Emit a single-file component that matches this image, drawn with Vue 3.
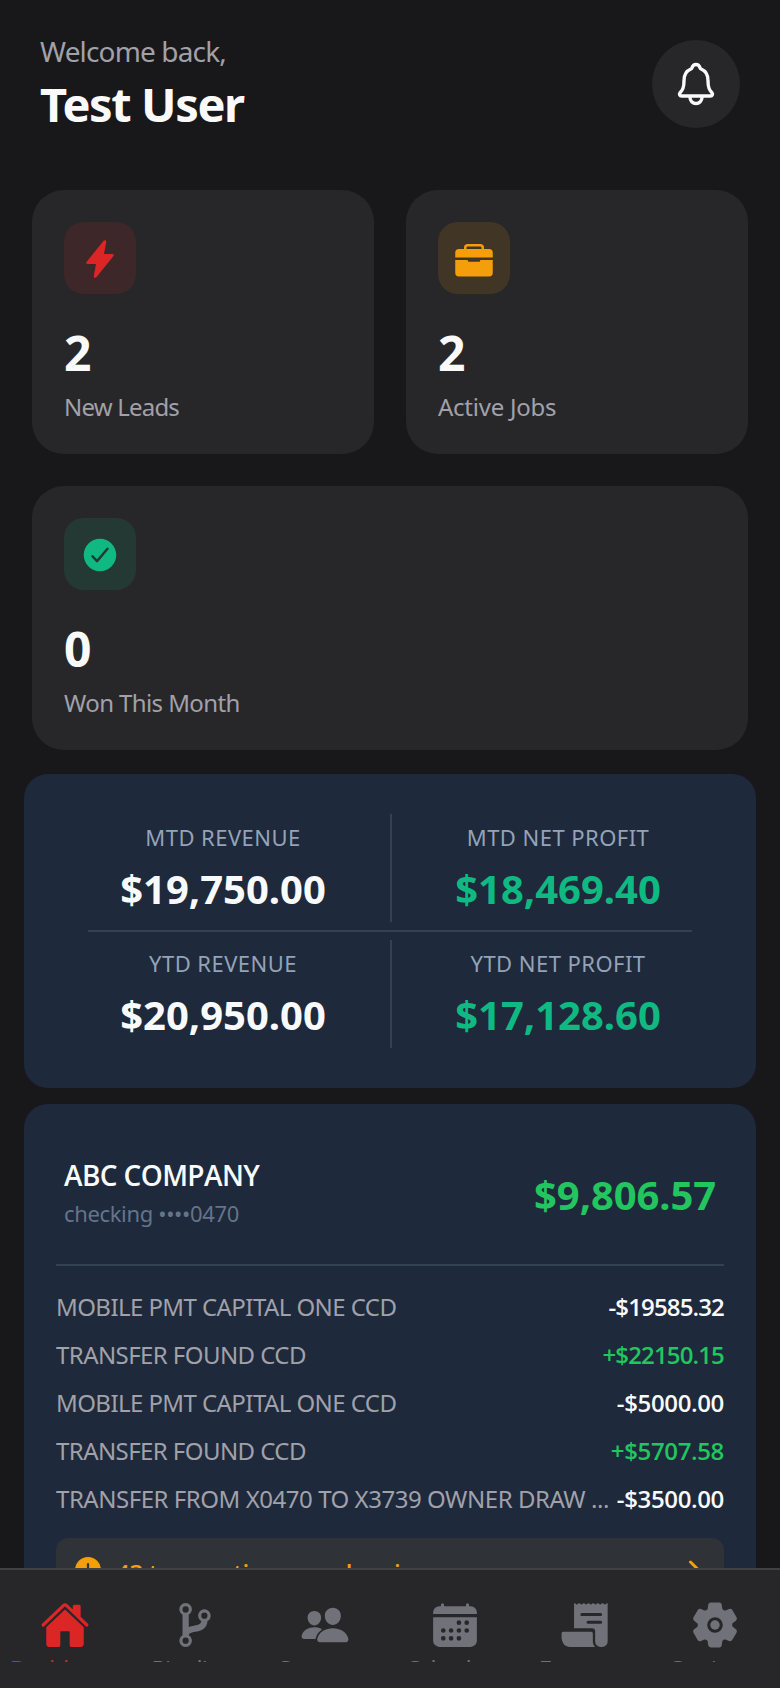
<script setup>
const stats = [
  { icon: 'flash', tone: 'red', value: '2', label: 'New Leads', cls: 'leads' },
  { icon: 'briefcase', tone: 'amber', value: '2', label: 'Active Jobs', cls: 'jobs' },
  { icon: 'check', tone: 'green', value: '0', label: 'Won This Month', cls: 'won' },
]

const finance = [
  [
    { label: 'MTD REVENUE', value: '$19,750.00' },
    { label: 'MTD NET PROFIT', value: '$18,469.40', profit: true },
  ],
  [
    { label: 'YTD REVENUE', value: '$20,950.00' },
    { label: 'YTD NET PROFIT', value: '$17,128.60', profit: true },
  ],
]

const transactions = [
  { name: 'MOBILE PMT CAPITAL ONE CCD', amount: '-$19585.32', tight: true },
  { name: 'TRANSFER FOUND CCD', amount: '+$22150.15', credit: true, tight: true },
  { name: 'MOBILE PMT CAPITAL ONE CCD', amount: '-$5000.00' },
  { name: 'TRANSFER FOUND CCD', amount: '+$5707.58', credit: true },
  { name: 'TRANSFER FROM X0470 TO X3739 OWNER DRAW ...', amount: '-$3500.00', long: true },
]

const tabs = [
  { label: 'Dashboa…', icon: 'home', active: true },
  { label: 'Pipelin…', icon: 'branch' },
  { label: 'Custom…', icon: 'people' },
  { label: 'Schedu…', icon: 'calendar' },
  { label: 'Expens…', icon: 'receipt' },
  { label: 'Setting…', icon: 'settings' },
]

const calendarDots = [
  [296, 232], [376, 232],
  [136, 312], [216, 312], [296, 312], [376, 312],
  [136, 392], [216, 392], [296, 392],
].map(([x, y]) => `M${x - 24} ${y}a24 24 0 1048 0a24 24 0 10-48 0z`).join('')

const icons = {
  flash: ['M194.82 496a18.36 18.36 0 01-18.1-21.53v-.11L204.83 320H96a16 16 0 01-12.44-26.06L302.73 23a18.45 18.45 0 0132.8 13.71c0 .3-.08.59-.13.89L307.19 192H416a16 16 0 0112.44 26.06L209.24 489a18.45 18.45 0 01-14.42 7z'],
  briefcase: [
    'M16 236v-60a48 48 0 0148-48h64v-16a48 48 0 0148-48h160a48 48 0 0148 48v16h64a48 48 0 0148 48v60zM160 128h192v-16a16 16 0 00-16-16H176a16 16 0 00-16 16z',
    'M16 268h160v8a16 16 0 0016 16h128a16 16 0 0016-16v-8h160v164a48 48 0 01-48 48H64a48 48 0 01-48-48z',
  ],
  check: ['M256 48C141.31 48 48 141.31 48 256s93.31 208 208 208 208-93.31 208-208S370.69 48 256 48zm108.25 138.29l-134.4 160a16 16 0 01-12 5.71h-.27a16 16 0 01-11.89-5.3l-57.6-64a16 16 0 1123.78-21.4l45.29 50.32 122.59-145.91a16 16 0 0124.5 20.58z'],
  home: [
    'M261.56 101.28a8 8 0 00-11.06 0L66.4 277.15a8 8 0 00-2.47 5.79L63.9 448a32 32 0 0032 32H192a16 16 0 0016-16V328a8 8 0 018-8h80a8 8 0 018 8v136a16 16 0 0016 16h96.06a32 32 0 0032-32V282.94a8 8 0 00-2.47-5.79z',
    'M490.91 244.15l-74.8-71.56V64a16 16 0 00-16-16h-48a16 16 0 00-16 16v32l-57.92-55.38C272.77 35.14 264.71 32 256 32c-8.68 0-16.72 3.14-22.14 8.63l-212.7 203.5c-6.22 6-7 15.87-1.34 22.37A16 16 0 0043 267.56L250.5 69.28a8 8 0 0111.06 0l207.52 198.28a16 16 0 0022.59-.44c6.14-6.36 5.63-16.86-.76-22.97z',
  ],
  branch: ['M416 160a64 64 0 10-96.27 55.24c-2.29 29.08-20.08 37-75 48.42-17.76 3.68-35.93 7.45-52.71 13.93v-126.2a64 64 0 10-64 0v209.22a64 64 0 1064.42.24c2.39-18 16-24.33 65.26-34.52 27.43-5.67 55.78-11.54 79.78-26.95 29-18.58 44.53-46.78 46.36-83.89A64 64 0 00416 160zM160 64a32 32 0 11-32 32 32 32 0 0132-32zm0 384a32 32 0 1132-32 32 32 0 01-32 32zm192-256a32 32 0 1132-32 32 32 0 01-32 32z'],
  people: [
    'M336 256c-20.56 0-40.44-9.18-56-25.84-15.13-16.25-24.37-37.92-26-61-1.74-24.62 5.77-47.26 21.14-63.76S312 80 336 80c23.83 0 45.38 9.06 60.7 25.52 15.47 16.62 23 39.22 21.26 63.63-1.67 23.11-10.9 44.77-26 61C376.44 246.82 356.57 256 336 256z',
    'M467.83 432H204.18a27.71 27.71 0 01-22-10.67 30.22 30.22 0 01-5.26-25.79c8.42-33.81 29.28-61.85 60.32-81.08C264.79 297.4 299.86 288 336 288c36.85 0 71 9 98.71 26.05 31.11 19.13 52 47.33 60.38 81.55a30.27 30.27 0 01-5.32 25.78A27.68 27.68 0 01467.83 432z',
    'M147 260c-35.19 0-66.13-32.72-69-72.93-1.42-20.6 5-39.65 18-53.62 12.86-13.83 31-21.45 51-21.45s38 7.66 50.93 21.57c13.1 14.08 19.5 33.09 18 53.52-2.87 40.2-33.8 72.91-68.93 72.91z',
    'M212.66 291.45c-17.59-8.6-40.42-12.9-65.65-12.9-29.46 0-58.07 7.68-80.57 21.62-25.51 15.83-42.67 38.88-49.6 66.71a27.39 27.39 0 004.79 23.36A25.32 25.32 0 0041.72 400h111a8 8 0 007.87-6.57c.11-.63.25-1.26.41-1.88 8.48-34.06 28.35-62.84 57.71-83.82a8 8 0 00-.63-13.39c-1.57-.92-3.37-1.89-5.42-2.89z',
  ],
  calendar: [
    'M480 128a64 64 0 00-64-64h-16V48a16 16 0 00-32 0v16H144V48a16 16 0 00-32 0v16H96a64 64 0 00-64 64v12a4 4 0 004 4h440a4 4 0 004-4z',
    'M32 416a64 64 0 0064 64h320a64 64 0 0064-64V179a3 3 0 00-3-3H35a3 3 0 00-3 3z' + calendarDots,
  ],
  receipt: [
    'M144 34l8-2 14 12q6 4 12 0l14-12 8 0 14 12q6 4 12 0l14-12 8 0 14 12q6 4 12 0l14-12 8 0 14 12q6 4 12 0l14-12 8 0 14 12q6 4 12 0l14-12 8 0 14 12q6 4 12 0l14-12 8 0 14 12q6 4 12 0l14-12 8 2V424a56 56 0 01-56 56h-16a56 56 0 01-56-56V320a32 32 0 00-32-32H144zM224 132a16 16 0 000 32h192a16 16 0 000-32zM288 212a16 16 0 000 32h128a16 16 0 000-32z',
    'M32 324H320a16 16 0 0116 16v84c0 22 8 42 24 56H104C45 480 16 432 16 376V340a16 16 0 0116-16z',
  ],
  settings: [
    'M208 256a48 48 0 1096 0a48 48 0 10-96 0z',
    'M470.39 300l-.47-.38-31.56-24.75a16.11 16.11 0 01-6.1-13.33v-11.56a16 16 0 016.11-13.22L469.92 212l.47-.38a26.68 26.68 0 005.9-34.06l-42.71-73.9a1.59 1.59 0 01-.13-.22A26.86 26.86 0 00401 92.14l-.35.13-37.1 14.93a15.94 15.94 0 01-14.47-1.29q-4.92-3.1-10-5.86a15.94 15.94 0 01-8.19-11.82l-5.59-39.59-.12-.72A27.22 27.22 0 00298.76 26h-85.52a26.92 26.92 0 00-26.45 22.39l-.09.56-5.57 39.67a16 16 0 01-8.13 11.82 175.21 175.21 0 00-10 5.82 15.92 15.92 0 01-14.43 1.27l-37.13-15-.35-.14a26.87 26.87 0 00-32.48 11.34l-.13.22-42.77 73.95a26.71 26.71 0 005.9 34.1l.47.38 31.56 24.75a16.11 16.11 0 016.1 13.33v11.56a16 16 0 01-6.11 13.22L42.08 300l-.47.38a26.68 26.68 0 00-5.9 34.06l42.71 73.9a1.59 1.59 0 01.13.22 26.86 26.86 0 0032.45 11.3l.35-.13 37.07-14.93a15.94 15.94 0 0114.47 1.29q4.92 3.11 10 5.86a15.94 15.94 0 018.19 11.82l5.56 39.59.12.72A27.22 27.22 0 00213.24 486h85.52a26.92 26.92 0 0026.45-22.39l.09-.56 5.57-39.67a16 16 0 018.18-11.82c3.42-1.84 6.76-3.79 10-5.82a15.92 15.92 0 0114.43-1.27l37.13 14.95.35.14a26.85 26.85 0 0032.48-11.34 2.53 2.53 0 01.13-.22l42.71-73.89a26.7 26.7 0 00-5.89-34.11zm-134.48-40.24a80 80 0 11-83.66-83.67 80.21 80.21 0 0183.66 83.67z',
  ],
}
</script>

<template>
  <div class="screen">
    <main class="content">
      <header class="header">
        <div>
          <div class="welcome">Welcome back,</div>
          <h1 class="user">Test User</h1>
        </div>
        <button class="bell" aria-label="Notifications">
          <svg viewBox="0 0 512 512" width="48" height="48" fill="none" stroke="#fafafa" stroke-width="36" stroke-linecap="round" stroke-linejoin="round">
            <path d="M427.68 351.43C402 320 383.87 304 383.87 217.35 383.87 138 343.35 109.73 310 96c-4.43-1.82-8.6-6-9.95-10.55C294.2 65.54 277.8 48 256 48s-38.21 17.55-44 37.47c-1.35 4.6-5.52 8.71-9.95 10.53-33.39 13.75-73.87 41.92-73.87 121.35C128.13 304 110 320 84.32 351.43 73.68 364.45 83 384 101.61 384h308.88c18.51 0 27.77-19.61 17.19-32.57zM320 384v16a64 64 0 01-128 0v-16" />
          </svg>
        </button>
      </header>

      <section class="stats">
        <article v-for="s in stats" :key="s.label" class="stat" :class="s.cls">
          <div class="badge" :class="s.tone">
            <svg viewBox="0 0 512 512" width="40" height="40" fill="currentColor" fill-rule="evenodd">
              <path v-for="d in icons[s.icon]" :key="d" :d="d" />
            </svg>
          </div>
          <div class="stat-value">{{ s.value }}</div>
          <div class="stat-label">{{ s.label }}</div>
        </article>
      </section>

      <section class="panel finance">
        <template v-for="(row, i) in finance" :key="i">
          <hr v-if="i" class="rule" />
          <div class="finance-row">
            <div v-for="cell in row" :key="cell.label" class="cell">
              <div class="cell-label">{{ cell.label }}</div>
              <div class="cell-value" :class="{ profit: cell.profit }">{{ cell.value }}</div>
            </div>
          </div>
        </template>
      </section>

      <section class="panel bank">
        <div class="account">
          <div>
            <div class="company">ABC COMPANY</div>
            <div class="number">checking ••••0470</div>
          </div>
          <div class="balance">$9,806.57</div>
        </div>
        <ul class="list">
          <li v-for="(t, i) in transactions" :key="i">
            <span class="tx-name" :class="{ long: t.long }">{{ t.name }}</span>
            <span class="tx-amount" :class="{ credit: t.credit, tight: t.tight }">{{ t.amount }}</span>
          </li>
        </ul>
        <div class="alert">
          <svg viewBox="0 0 512 512" width="32" height="32">
            <circle cx="256" cy="256" r="208" fill="#f59e0b" />
            <path d="M256 160v130M256 346v4" stroke="#2f3236" stroke-width="36" stroke-linecap="round" />
          </svg>
          <span class="alert-text">43 transactions need review</span>
          <svg class="chevron" viewBox="0 0 512 512" width="32" height="32" fill="none" stroke="#f59e0b" stroke-width="48" stroke-linecap="round" stroke-linejoin="round">
            <path d="M184 112l144 144-144 144" />
          </svg>
        </div>
      </section>
    </main>

    <nav class="tabs">
      <div v-for="t in tabs" :key="t.label" class="tab" :class="{ active: t.active }">
        <svg viewBox="0 0 512 512" width="50" height="50" fill="currentColor" fill-rule="evenodd">
          <path v-for="d in icons[t.icon]" :key="d" :d="d" />
        </svg>
        <div class="tab-label">{{ t.label }}</div>
      </div>
    </nav>
  </div>
</template>

<style>
body {
  background: #18181b;
  overflow: hidden;
}
</style>

<style scoped>
* {
  box-sizing: border-box;
}
.screen {
  display: flex;
  flex-direction: column;
  width: 780px;
  height: 1688px;
  overflow: hidden;
  background: #18181b;
  color: #fafafa;
  font-family: 'Noto Sans', 'Open Sans', sans-serif;
  white-space: nowrap;
}
.content {
  flex: 1;
  min-height: 0;
  overflow: hidden;
}
.header {
  display: flex;
  justify-content: space-between;
  align-items: flex-start;
  height: 190px;
  padding: 40px 40px 0;
}
.welcome {
  margin-top: -8px;
  font-size: 28px;
  line-height: 38px;
  letter-spacing: -0.85px;
  color: #a1a1aa;
}
.user {
  margin: 2px 0 0;
  font-size: 47px;
  line-height: 64px;
  font-weight: 700;
  letter-spacing: -1.4px;
}
.bell {
  display: flex;
  align-items: center;
  justify-content: center;
  width: 88px;
  height: 88px;
  padding: 0;
  border: 0;
  border-radius: 50%;
  background: #27272a;
}
.stats {
  display: grid;
  grid-template-columns: 1fr 1fr;
  gap: 32px;
  padding: 0 32px;
}
.stat {
  height: 264px;
  padding: 32px;
  border-radius: 32px;
  background: #27272a;
}
.won {
  grid-column: span 2;
}
.badge {
  display: flex;
  align-items: center;
  justify-content: center;
  width: 72px;
  height: 72px;
  padding-top: 1px;
  border-radius: 20px;
}
.red {
  color: #dc2626;
  background: rgba(220, 38, 38, 0.125);
}
.amber {
  color: #f59e0b;
  background: rgba(245, 158, 11, 0.125);
}
.green {
  color: #10b981;
  background: rgba(16, 185, 129, 0.125);
}
.stat-value {
  margin-top: 27px;
  font-size: 48px;
  line-height: 64px;
  font-weight: 700;
}
.stat-label {
  margin-top: 6px;
  font-size: 24px;
  line-height: 32px;
  letter-spacing: -0.6px;
  color: #a1a1aa;
}
.leads .stat-label {
  letter-spacing: -0.8px;
}
.jobs .stat-label {
  letter-spacing: -0.25px;
}
.panel {
  margin: 0 24px;
  border-radius: 24px;
  background: #1e293b;
}
.finance {
  height: 314px;
  margin-top: 24px;
  padding: 40px 32px;
}
.finance-row {
  display: grid;
  grid-template-columns: 336px 332px;
  height: 108px;
}
.cell {
  padding-top: 7px;
  text-align: center;
}
.cell:first-child {
  border-right: 2px solid #334155;
}
.cell-label {
  font-size: 22px;
  line-height: 32px;
  letter-spacing: 0.45px;
  color: #94a3b8;
}
.cell-value {
  margin-top: 9px;
  font-size: 40px;
  line-height: 54px;
  font-weight: 700;
  color: #f8fafc;
}
.cell-value.profit {
  color: #10b981;
}
.rule {
  height: 2px;
  margin: 8px 32px;
  border: 0;
  background: #334155;
}
.bank {
  margin-top: 16px;
  padding: 32px;
  height: 560px;
}
.account {
  display: flex;
  justify-content: space-between;
  height: 130px;
  padding: 20px 8px 0;
  border-bottom: 2px solid #334155;
}
.company {
  font-family: 'Open Sans', sans-serif;
  font-size: 28px;
  line-height: 38px;
  font-weight: 600;
  letter-spacing: -0.6px;
  color: #f8fafc;
}
.number {
  margin-top: 3px;
  font-size: 22px;
  line-height: 32px;
  letter-spacing: -0.35px;
  color: #64748b;
}
.balance {
  margin-top: 12px;
  font-size: 40px;
  line-height: 54px;
  font-weight: 700;
  letter-spacing: -0.1px;
  color: #22c55e;
}
.list {
  margin: 17px 0 15px;
  padding: 0;
  list-style: none;
  font-size: 24px;
  line-height: 48px;
}
.list li {
  display: flex;
  justify-content: space-between;
  height: 48px;
}
.tx-name {
  letter-spacing: -0.57px;
  color: #a1a1aa;
}
.tx-name.long {
  letter-spacing: -0.46px;
}
.tx-amount {
  font-family: 'Open Sans', sans-serif;
  font-weight: 600;
  letter-spacing: -0.35px;
  color: #f8fafc;
}
.tx-amount.tight {
  letter-spacing: -0.85px;
}
.tx-amount.credit {
  color: #22c55e;
}
.alert {
  display: flex;
  align-items: center;
  height: 64px;
  padding: 0 13px 0 16px;
  border-radius: 12px;
  background: #2f3236;
}
.alert-text {
  flex: 1;
  margin: 5px 0 0 12px;
  font-family: 'Open Sans', sans-serif;
  font-size: 24px;
  font-weight: 600;
  letter-spacing: -0.3px;
  color: #f59e0b;
}
.chevron {
  margin-top: 2px;
}
.tabs {
  display: grid;
  grid-template-columns: repeat(6, 130px);
  flex: none;
  height: 120px;
  padding-top: 30px;
  border-top: 2px solid #3f3f46;
  background: #27272a;
}
.tab {
  display: flex;
  flex-direction: column;
  align-items: center;
  height: 62px;
  overflow: hidden;
  color: #71717a;
}
.tab.active {
  color: #dc2626;
}
.tab svg {
  flex: none;
}
.tab-label {
  margin-top: 3px;
  font-family: 'Open Sans', sans-serif;
  font-size: 24px;
  line-height: 32px;
  font-weight: 500;
  letter-spacing: -0.9px;
}
</style>
